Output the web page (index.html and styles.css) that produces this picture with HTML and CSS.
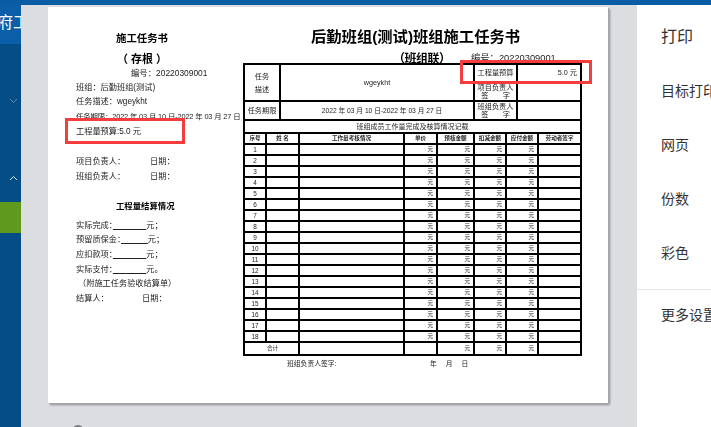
FILE: index.html
```html
<!DOCTYPE html>
<html lang="zh-CN">
<head>
<meta charset="utf-8">
<title>打印</title>
<link rel="stylesheet" href="styles.css">
</head>
<body>
<div class="app">
  <div class="topbar"></div>
  <div class="main">
    <aside class="side">
      <div class="brand"><span class="brand-text">政府工程</span></div>
      <div class="chev chev-down"><svg width="9" height="6" viewBox="0 0 9 6"><path d="M1 1l3.5 3.5L8 1" fill="none" stroke="#5f8db3" stroke-width="1"/></svg></div>
      <div class="chev chev-up"><svg width="9" height="6" viewBox="0 0 9 6"><path d="M1 5l3.5-3.5L8 5" fill="none" stroke="#dbe7f1" stroke-width="1"/></svg></div>
      <div class="active"></div>
    </aside>
    <section class="preview">
      <div class="page">
        <div class="sheet">
          <div class="stub">
            <h2 class="stub-title">施工任务书</h2>
            <h3 class="stub-sub">（ 存根 ）</h3>
            <p class="stub-no">编号：20220309001</p>
            <p>班组：后勤班组(测试)</p>
            <p>任务描述：wgeykht</p>
            <p class="tight">任务期限：2022 年 03 月 10 日-2022 年 03 月 27 日</p>
            <p>工程量预算:5.0 元</p>
            <p class="sign gap-a"><span class="sign-l">项目负责人：</span><span>日期：</span></p>
            <p class="sign"><span class="sign-l">班组负责人：</span><span>日期：</span></p>
            <h4 class="stub-head">工程量结算情况</h4>
            <p>实际完成：<u class="blank">　　　　　</u>元；</p>
            <p>预留质保金：<u class="blank">　　　　</u>元；</p>
            <p>应扣款项：<u class="blank">　　　　　</u>元；</p>
            <p>实际支付：<u class="blank">　　　　　</u>元。</p>
            <p class="indent">（附施工任务验收结算单）</p>
            <p class="sign"><span class="sign-m">结算人：</span><span>日期：</span></p>
          </div>
          <div class="form">
            <h1 class="form-title">后勤班组(测试)班组施工任务书</h1>
            <div class="form-sub"><strong>（班组联）</strong><span class="form-no">编号：20220309001</span></div>
            <table class="grid">
              <colgroup>
                <col class="c22"><col class="c14"><col class="c19"><col class="c105"><col class="c33"><col class="c37"><col class="c32"><col class="c11"><col class="c21"><col class="c43">
              </colgroup>
              <tr class="r18 big"><td colspan="2" rowspan="2" class="wide-lead">任务<br>描述</td><td colspan="4" rowspan="2">wgeykht</td><td colspan="2">工程量预算</td><td colspan="2" class="amt">5.0 元</td></tr>
              <tr class="r19 big"><td colspan="2" class="sm">项目负责人<br>签　　字</td><td colspan="2"></td></tr>
              <tr class="r19 big"><td colspan="2">任务期限</td><td colspan="4" class="dates">2022 年 03 月 10 日-2022 年 03 月 27 日</td><td colspan="2" class="sm">班组负责人<br>签　　字</td><td colspan="2"></td></tr>
              <tr class="r13"><td colspan="10" class="band">班组成员工作量完成及核算情况记载</td></tr>
              <tr class="r11 th"><td>序号</td><td colspan="2">姓 名</td><td>工作量考核情况</td><td>单价</td><td>预核金额</td><td>扣减金额</td><td colspan="2">应付金额</td><td>劳动者签字</td></tr>
              <tr class="r11"><td>1</td><td colspan="2"></td><td></td><td class="y">元</td><td class="y">元</td><td class="y">元</td><td colspan="2" class="y">元</td><td></td></tr>
              <tr class="r11"><td>2</td><td colspan="2"></td><td></td><td class="y">元</td><td class="y">元</td><td class="y">元</td><td colspan="2" class="y">元</td><td></td></tr>
              <tr class="r11"><td>3</td><td colspan="2"></td><td></td><td class="y">元</td><td class="y">元</td><td class="y">元</td><td colspan="2" class="y">元</td><td></td></tr>
              <tr class="r11"><td>4</td><td colspan="2"></td><td></td><td class="y">元</td><td class="y">元</td><td class="y">元</td><td colspan="2" class="y">元</td><td></td></tr>
              <tr class="r11"><td>5</td><td colspan="2"></td><td></td><td class="y">元</td><td class="y">元</td><td class="y">元</td><td colspan="2" class="y">元</td><td></td></tr>
              <tr class="r11"><td>6</td><td colspan="2"></td><td></td><td class="y">元</td><td class="y">元</td><td class="y">元</td><td colspan="2" class="y">元</td><td></td></tr>
              <tr class="r11"><td>7</td><td colspan="2"></td><td></td><td class="y">元</td><td class="y">元</td><td class="y">元</td><td colspan="2" class="y">元</td><td></td></tr>
              <tr class="r11"><td>8</td><td colspan="2"></td><td></td><td class="y">元</td><td class="y">元</td><td class="y">元</td><td colspan="2" class="y">元</td><td></td></tr>
              <tr class="r11"><td>9</td><td colspan="2"></td><td></td><td class="y">元</td><td class="y">元</td><td class="y">元</td><td colspan="2" class="y">元</td><td></td></tr>
              <tr class="r11"><td>10</td><td colspan="2"></td><td></td><td class="y">元</td><td class="y">元</td><td class="y">元</td><td colspan="2" class="y">元</td><td></td></tr>
              <tr class="r11"><td>11</td><td colspan="2"></td><td></td><td class="y">元</td><td class="y">元</td><td class="y">元</td><td colspan="2" class="y">元</td><td></td></tr>
              <tr class="r11"><td>12</td><td colspan="2"></td><td></td><td class="y">元</td><td class="y">元</td><td class="y">元</td><td colspan="2" class="y">元</td><td></td></tr>
              <tr class="r11"><td>13</td><td colspan="2"></td><td></td><td class="y">元</td><td class="y">元</td><td class="y">元</td><td colspan="2" class="y">元</td><td></td></tr>
              <tr class="r11"><td>14</td><td colspan="2"></td><td></td><td class="y">元</td><td class="y">元</td><td class="y">元</td><td colspan="2" class="y">元</td><td></td></tr>
              <tr class="r11"><td>15</td><td colspan="2"></td><td></td><td class="y">元</td><td class="y">元</td><td class="y">元</td><td colspan="2" class="y">元</td><td></td></tr>
              <tr class="r11"><td>16</td><td colspan="2"></td><td></td><td class="y">元</td><td class="y">元</td><td class="y">元</td><td colspan="2" class="y">元</td><td></td></tr>
              <tr class="r11"><td>17</td><td colspan="2"></td><td></td><td class="y">元</td><td class="y">元</td><td class="y">元</td><td colspan="2" class="y">元</td><td></td></tr>
              <tr class="r11"><td>18</td><td colspan="2"></td><td></td><td class="y">元</td><td class="y">元</td><td class="y">元</td><td colspan="2" class="y">元</td><td></td></tr>
              <tr class="r13"><td colspan="3" class="total">合计</td><td></td><td></td><td class="y">元</td><td class="y">元</td><td colspan="2" class="y">元</td><td></td></tr>
            </table>
            <div class="form-foot"><span class="foot-l">班组负责人签字:</span><span>年</span><span>月</span><span>日</span></div>
          </div>
        </div>
        <div class="mark mark-a"></div>
        <div class="mark mark-b"></div>
      </div>
      <div class="spinner"></div>
    </section>
    <section class="panel">
      <h2 class="panel-title">打印</h2>
      <div class="opt opt-first">目标打印机</div>
      <div class="opt">网页</div>
      <div class="opt">份数</div>
      <div class="opt">彩色</div>
      <div class="more">更多设置</div>
    </section>
  </div>
</div>
</body>
</html>
```
FILE: styles.css
```css
* { box-sizing: border-box; }
html, body { margin: 0; padding: 0; height: 100%; overflow: hidden; }
body { font-family: "Liberation Sans", "Noto Sans CJK SC", sans-serif; background: #dcdde1; }
.app { width: 711px; height: 427px; display: flex; flex-direction: column; overflow: hidden; }
.topbar { height: 5px; flex: none; background: #0a5ca4; }
.main { flex: 1; display: flex; min-height: 0; }

.side { width: 21px; flex: none; background: #054d86; display: flex; flex-direction: column; overflow: hidden; }
.brand { height: 39px; flex: none; background: #0a5fa8; display: flex; justify-content: flex-end; align-items: center; padding-bottom: 7px; overflow: hidden; }
.brand-text { color: #fff; font-size: 16px; white-space: nowrap; margin-right: -24px; }
.chev { display: flex; justify-content: center; height: 6px; }
.chev svg { display: block; margin-left: 6px; }
.chev-down { margin-top: 54px; }
.chev-up { margin-top: 71px; }
.active { height: 31px; margin-top: 21px; background: #5f9a1e; }

.preview { width: 616px; flex: none; background: #dcdde1; padding: 2px 0 0 27px; position: relative; overflow: hidden; }
.page { width: 560px; height: 396px; background: #fff; box-shadow: 1px 1px 0 #a5a6a9, 2px 2px 2px #8e8f92; position: relative; }
.sheet { display: flex; height: 100%; padding-left: 28px; color: #222; filter: blur(0.3px); }
.spinner { position: absolute; left: 51px; top: 420px; width: 12px; height: 12px; border-radius: 50%; background: #77787b; }

.stub { width: 167px; flex: none; font-size: 8.2px; line-height: 14.7px; }
.stub p { margin: 0; white-space: nowrap; }
.stub-title { margin: 25px 0 0; font-size: 10.4px; line-height: 14px; text-align: center; width: 132px; color: #000; }
.stub-sub { margin: 6px 0 0; font-size: 11px; line-height: 14px; text-align: center; width: 132px; color: #000; }
.stub .stub-no { margin: 0 0 0 55px; font-size: 8.4px; }
.stub .tight { font-size: 7.4px; letter-spacing: -0.02em; }
.stub .gap-a { margin-top: 15.5px; }
.sign { display: flex; }
.sign-l { width: 74px; }
.sign-m { width: 66px; }
.stub-head { margin: 14.5px 0 5px 40px; font-size: 8.4px; line-height: 14.7px; color: #000; }
.blank { color: #222; text-decoration: underline; font-size: 6.7px; }
.stub .indent { padding-left: 2px; }

.form { width: 338px; flex: none; }
.form-title { margin: 20px 0 0 68px; font-size: 15.3px; line-height: 20px; white-space: nowrap; color: #000; font-weight: 700; }
.form-sub { display: flex; align-items: center; height: 15px; margin-top: 3px; padding-left: 150px; font-size: 12px; white-space: nowrap; }
.form-sub strong { width: 78px; flex: none; color: #000; letter-spacing: -0.5px; }
.form-no { font-size: 9.3px; margin-top: -1px; }

.grid { border-collapse: collapse; table-layout: fixed; width: 337px; font-size: 6.4px; line-height: 7.5px; color: #222; margin-top: -2px; }
.grid td { border: 2px solid #000; padding: 0; text-align: center; overflow: hidden; white-space: nowrap; }
.c22 { width: 22px; } .c14 { width: 14px; } .c19 { width: 19px; } .c105 { width: 105px; }
.c33 { width: 33px; } .c37 { width: 37px; } .c32 { width: 32px; } .c11 { width: 11px; }
.c21 { width: 21px; } .c43 { width: 43px; }
.r18 { height: 18px; } .r19 { height: 19px; } .r13 { height: 13px; } .r11 { height: 11px; }
.big td { font-size: 7.2px; }
.grid .wide-lead { line-height: 13px; }
.grid .sm { line-height: 7.5px; }
.grid .amt { text-align: right; padding-right: 3px; }
.grid .y { text-align: right; padding-right: 3px; font-size: 5.6px; }
.grid .band { font-size: 7px; }
.grid .dates { font-size: 6.7px; padding-left: 10px; }
.grid .th td { font-size: 5.6px; font-weight: 700; }
.grid .total { text-align: left; padding-left: 22px; font-size: 5.6px; }
.form-foot { display: flex; gap: 9px; padding-left: 44px; margin-top: 3px; font-size: 6.8px; line-height: 10px; }
.foot-l { width: 134px; flex: none; }

.mark { position: absolute; border: 3px solid #f53d3d; }
.mark-a { left: 17px; top: 111px; width: 120px; height: 26px; }
.mark-b { left: 412px; top: 53px; width: 132px; height: 24px; }

.panel { flex: 1; background: #fff; overflow: hidden; color: #333; font-size: 14px; white-space: nowrap; }
.panel-title { margin: 22px 0 0 24px; font-size: 16px; line-height: 20px; font-weight: 400; }
.opt { padding-left: 24px; line-height: 20px; margin-top: 34px; }
.opt-first { margin-top: 34px; }
.more { border-top: 1px solid #e6e6e6; margin-top: 26px; padding: 15px 0 0 24px; line-height: 20px; }
```
